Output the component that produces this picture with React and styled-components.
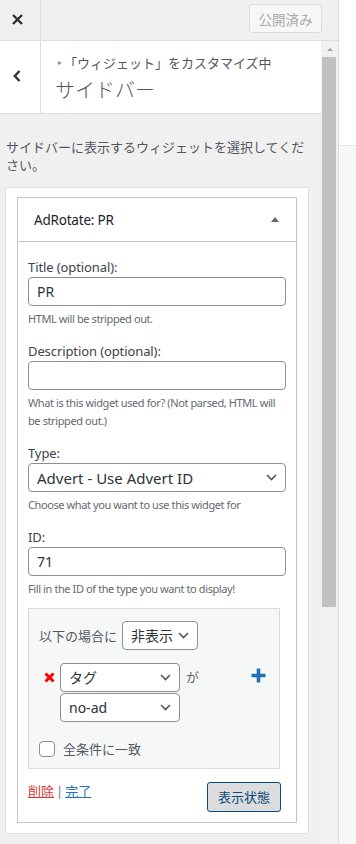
import React from 'react';
import styled, { createGlobalStyle } from 'styled-components';

const GlobalStyle = createGlobalStyle`
  html, body {
    margin: 0;
    padding: 0;
  }
  body {
    font-family: "Noto Sans", "Noto Sans CJK JP", sans-serif;
    color: #3c434a;
    background: #fff;
  }
  * {
    box-sizing: border-box;
  }
`;

const Frame = styled.div`
  display: flex;
  width: 356px;
  height: 844px;
  overflow: hidden;
`;

const Sidebar = styled.div`
  width: 339px;
  flex: none;
  display: flex;
  flex-direction: column;
  background: #f0f0f1;
  border-right: 1px solid #dcdcde;
`;

const Preview = styled.div`
  flex: 1;
  display: flex;
  flex-direction: column;
  background: #f6f7f7;
`;

const PreviewTop = styled.div`
  height: 146px;
  background: #fff;
  border-bottom: 1px solid #e4e4e4;
`;

const Header = styled.div`
  height: 41px;
  flex: none;
  display: flex;
  align-items: flex-start;
  justify-content: space-between;
  border-bottom: 1px solid #dcdcde;
`;

const IconButton = styled.div`
  width: 41px;
  height: ${p => p.$height}px;
  flex: none;
  display: flex;
  align-items: center;
  justify-content: center;
  padding: 0 6px 2px 0;
  border-right: 1px solid #dcdcde;
  color: #2c3338;
`;

const PublishButton = styled.div`
  margin: 4px 16px 0 0;
  width: 73px;
  height: 29px;
  display: flex;
  align-items: center;
  justify-content: center;
  background: #f6f7f7;
  border: 1px solid #dcdcde;
  border-radius: 3px;
  color: #a7aaad;
  font-size: 13.5px;
`;

const Body = styled.div`
  flex: 1;
  min-height: 0;
  display: flex;
`;

const Content = styled.div`
  width: 321px;
  flex: none;
  overflow: hidden;
`;

const Scrollbar = styled.div`
  width: 17px;
  flex: none;
  display: flex;
  flex-direction: column;
  background: #f1f1f1;
`;

const ScrollArrow = styled.div`
  height: 16px;
  display: flex;
  justify-content: center;
  padding-top: 7px;
  &::before {
    content: '';
    border-left: 3px solid transparent;
    border-right: 3px solid transparent;
    border-bottom: 3px solid #a3a3a3;
    height: 0;
  }
`;

const ScrollThumb = styled.div`
  height: 550px;
  margin: 0 2px 0 1px;
  background: #c1c1c1;
`;

const SectionTitle = styled.div`
  height: 73px;
  display: flex;
  background: #fff;
  border-bottom: 1px solid #dcdcde;
`;

const TitleText = styled.div`
  padding: 12px 0 0 14px;
`;

const Breadcrumb = styled.div`
  display: flex;
  align-items: center;
  font-size: 13px;
  line-height: 20px;
  color: #50575e;
  &::before {
    content: '';
    border-top: 2.5px solid transparent;
    border-bottom: 2.5px solid transparent;
    border-left: 4px solid #8c8f94;
    margin: 0 2px 0 3px;
  }
`;

const PanelTitle = styled.div`
  margin-top: 4px;
  font-size: 20px;
  line-height: 28px;
  font-weight: 300;
  color: #50575e;
`;

const Description = styled.p`
  margin: 0;
  padding: 24px 12px 0 6px;
  font-size: 13px;
  line-height: 18px;
  color: #50575e;
`;

const Card = styled.div`
  margin: 13px 12px 0 5px;
  padding: 9px 11px 10px;
  background: #fff;
  border: 1px solid #e2e2e4;
`;

const Widget = styled.div`
  border: 1px solid #c3c4c7;
  background: #fff;
`;

const WidgetHeader = styled.div`
  height: 44px;
  display: flex;
  align-items: center;
  justify-content: space-between;
  padding: 0 17px 0 16px;
  border-bottom: 1px solid #c3c4c7;
  font-size: 13.5px;
  letter-spacing: -0.2px;
  color: #1d2327;
`;

const Caret = styled.span`
  width: 0;
  height: 0;
  border-left: 4px solid transparent;
  border-right: 4px solid transparent;
  border-bottom: 5px solid #646970;
`;

const WidgetBody = styled.div`
  display: flex;
  flex-direction: column;
  padding: 16px 10px 10px;
`;

const Field = styled.div`
  & + & {
    margin-top: 14px;
  }
`;

const Label = styled.div`
  font-size: 13px;
  line-height: 19px;
  letter-spacing: -0.1px;
  color: #3c434a;
`;

const TextInput = styled.input`
  display: block;
  width: 100%;
  height: 29px;
  margin: 0;
  padding: 0 8px;
  border: 1px solid #8c8f94;
  border-radius: 4px;
  background: #fff;
  font-family: inherit;
  font-size: 14px;
  color: #2c3338;
  outline: none;
`;

const Hint = styled.div`
  margin-top: 4px;
  font-size: 11px;
  line-height: 18px;
  letter-spacing: -0.4px;
  color: #646970;
`;

const Select = styled.div`
  width: ${p => p.$width || '100%'};
  height: 29px;
  flex: none;
  display: flex;
  align-items: center;
  justify-content: space-between;
  padding: 0 8px;
  border: 1px solid #8c8f94;
  border-radius: 4px;
  background: #fff;
  font-size: ${p => p.$size || 14}px;
  color: #2c3338;
`;

const Chevron = () => (
  <svg width="11" height="7" viewBox="0 0 11 7">
    <polyline points="1,1 5.5,5.5 10,1" fill="none" stroke="#50575e" strokeWidth="1.6" />
  </svg>
);

const Conditions = styled.div`
  width: 252px;
  margin-top: 10px;
  padding: 12px 10px 11px;
  background: #f6f7f7;
  border: 1px solid #dcdcde;
`;

const CondRow = styled.div`
  display: flex;
  align-items: ${p => p.$align || 'center'};
  gap: ${p => p.$gap || 0}px;
  margin-bottom: ${p => p.$mb || 0}px;
  font-size: 13px;
  line-height: 16px;
  color: #50575e;
`;

const RemoveMark = styled.div`
  width: 21px;
  flex: none;
  height: 29px;
  display: flex;
  align-items: center;
  padding-left: 5px;
`;

const SelectStack = styled.div`
  display: flex;
  flex-direction: column;
  gap: 1px;
`;

const Ga = styled.span`
  margin-left: 6px;
  font-size: 13px;
  line-height: 29px;
  color: #646970;
`;

const AddMark = styled.div`
  margin: 5px 3px 0 auto;
  display: flex;
`;

const Checkbox = styled.span`
  width: 16px;
  height: 16px;
  flex: none;
  border: 1px solid #8c8f94;
  border-radius: 4px;
  background: #fff;
`;

const Footer = styled.div`
  margin-top: 13px;
  display: flex;
  align-items: flex-start;
  justify-content: space-between;
  font-size: 13px;
  line-height: 18px;
`;

const Links = styled.div`
  color: #50575e;
`;

const TextLink = styled.a`
  color: ${p => (p.$danger ? '#d63638' : '#2271b1')};
  text-decoration: underline;
`;

const Sep = styled.span`
  margin: 0 2px;
  color: #787c82;
`;

const StateButton = styled.div`
  width: 74px;
  height: 30px;
  margin-right: 5px;
  display: flex;
  align-items: center;
  justify-content: center;
  background: #dcdcde;
  border: 1px solid #0a4b78;
  border-radius: 3px;
  color: #0a4b78;
  font-size: 13px;
`;

const CloseIcon = () => (
  <svg width="11" height="11" viewBox="0 0 11 11">
    <path d="M1 1L10 10M10 1L1 10" stroke="currentColor" strokeWidth="2.4" />
  </svg>
);

const BackIcon = () => (
  <svg width="8" height="12" viewBox="0 0 8 12">
    <polyline points="6.5,1 1.8,6 6.5,11" fill="none" stroke="currentColor" strokeWidth="2.4" />
  </svg>
);

const RedX = () => (
  <svg width="11" height="11" viewBox="0 0 11 11">
    <path d="M1.5 1.5L9.5 9.5M9.5 1.5L1.5 9.5" stroke="#ff0000" strokeWidth="3" />
  </svg>
);

const Plus = () => (
  <svg width="15" height="15" viewBox="0 0 15 15">
    <path d="M7.5 0.5V14.5M0.5 7.5H14.5" stroke="#2271b1" strokeWidth="3.6" />
  </svg>
);

const App = () => {
  return (
    <Frame>
      <GlobalStyle />
      <Sidebar>
        <Header>
          <IconButton $height={40}>
            <CloseIcon />
          </IconButton>
          <PublishButton>公開済み</PublishButton>
        </Header>
        <Body>
          <Content>
            <SectionTitle>
              <IconButton $height={72}>
                <BackIcon />
              </IconButton>
              <TitleText>
                <Breadcrumb>「ウィジェット」をカスタマイズ中</Breadcrumb>
                <PanelTitle>サイドバー</PanelTitle>
              </TitleText>
            </SectionTitle>

            <Description>サイドバーに表示するウィジェットを選択してください。</Description>

            <Card>
              <Widget>
                <WidgetHeader>
                  <span>AdRotate: PR</span>
                  <Caret />
                </WidgetHeader>
                <WidgetBody>
                  <Field>
                    <Label>Title (optional):</Label>
                    <TextInput readOnly defaultValue="PR" />
                    <Hint>HTML will be stripped out.</Hint>
                  </Field>
                  <Field>
                    <Label>Description (optional):</Label>
                    <TextInput readOnly defaultValue="" />
                    <Hint>What is this widget used for? (Not parsed, HTML will be stripped out.)</Hint>
                  </Field>
                  <Field>
                    <Label>Type:</Label>
                    <Select $size={15}>
                      <span>Advert - Use Advert ID</span>
                      <Chevron />
                    </Select>
                    <Hint>Choose what you want to use this widget for</Hint>
                  </Field>
                  <Field>
                    <Label>ID:</Label>
                    <TextInput readOnly defaultValue="71" />
                    <Hint>Fill in the ID of the type you want to display!</Hint>
                  </Field>

                  <Conditions>
                    <CondRow $gap={5} $mb={13}>
                      <span>以下の場合に</span>
                      <Select $width="76px">
                        <span>非表示</span>
                        <Chevron />
                      </Select>
                    </CondRow>
                    <CondRow $align="flex-start" $mb={19}>
                      <RemoveMark>
                        <RedX />
                      </RemoveMark>
                      <SelectStack>
                        <Select $width="120px">
                          <span>タグ</span>
                          <Chevron />
                        </Select>
                        <Select $width="120px">
                          <span>no-ad</span>
                          <Chevron />
                        </Select>
                      </SelectStack>
                      <Ga>が</Ga>
                      <AddMark>
                        <Plus />
                      </AddMark>
                    </CondRow>
                    <CondRow $gap={8}>
                      <Checkbox />
                      <span>全条件に一致</span>
                    </CondRow>
                  </Conditions>

                  <Footer>
                    <Links>
                      <TextLink $danger>削除</TextLink>
                      <Sep>|</Sep>
                      <TextLink>完了</TextLink>
                    </Links>
                    <StateButton>表示状態</StateButton>
                  </Footer>
                </WidgetBody>
              </Widget>
            </Card>
          </Content>
          <Scrollbar>
            <ScrollArrow />
            <ScrollThumb />
          </Scrollbar>
        </Body>
      </Sidebar>
      <Preview>
        <PreviewTop />
      </Preview>
    </Frame>
  );
};

export default App;
